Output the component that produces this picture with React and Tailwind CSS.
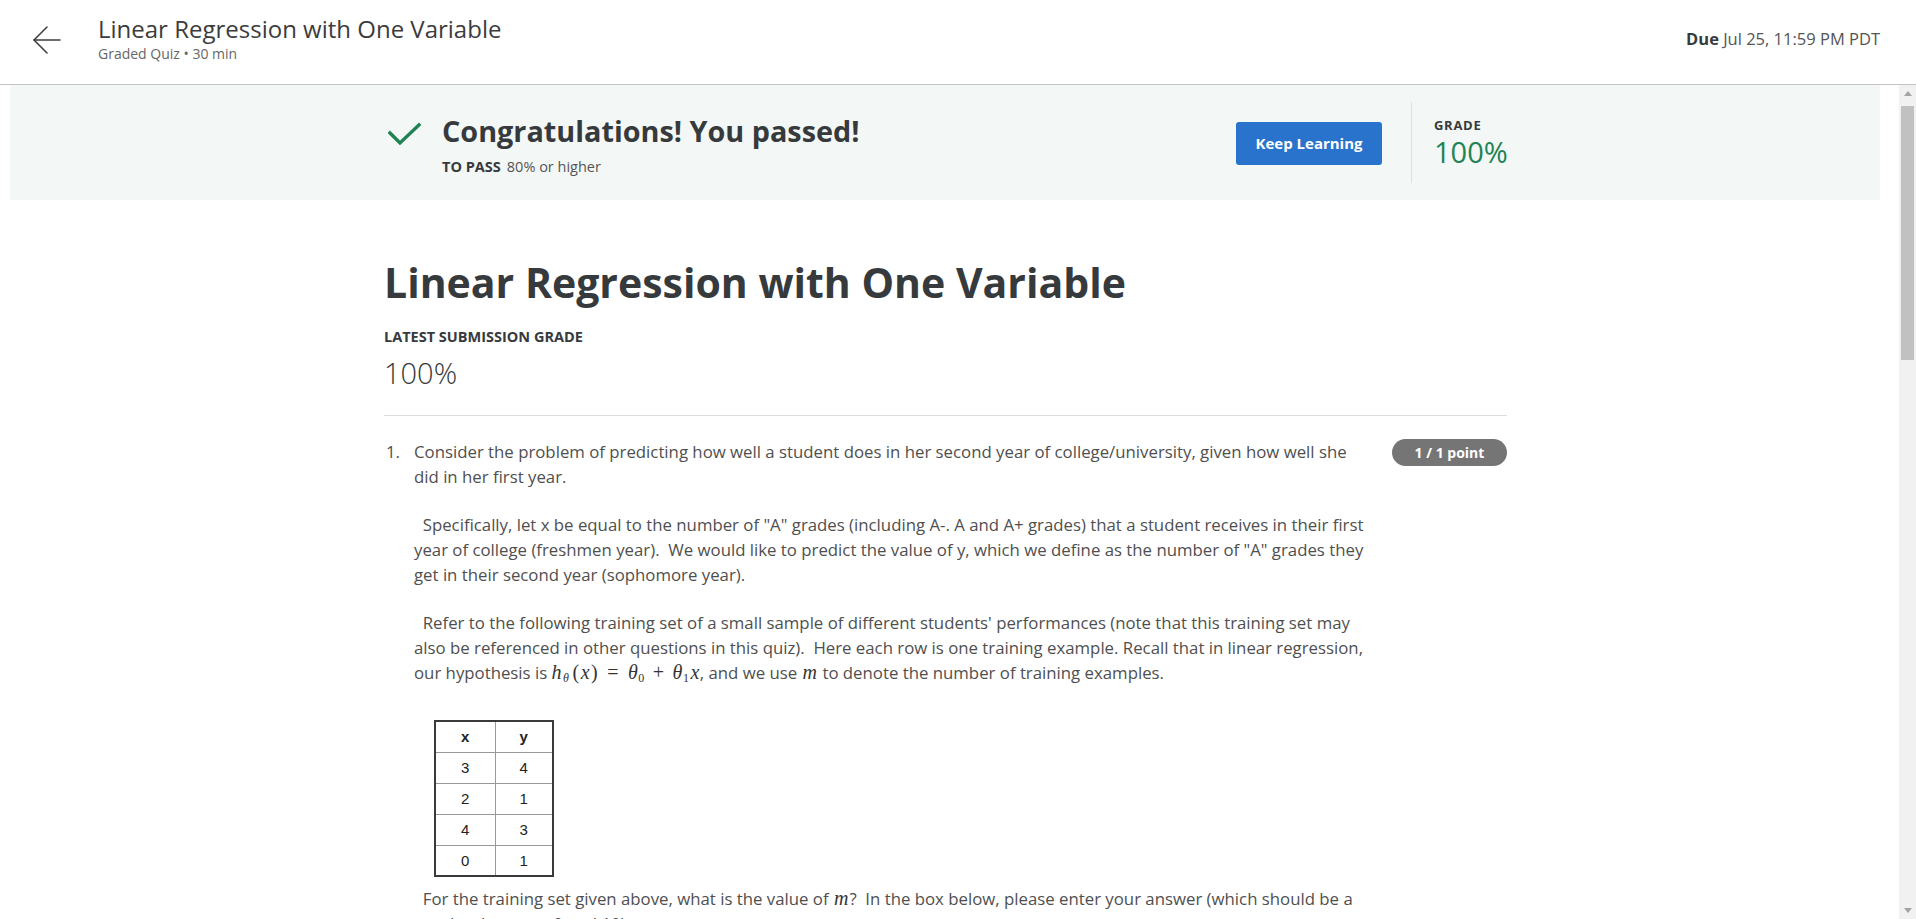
import React from 'react';

function BackArrow() {
  return (
    <svg width="28" height="28" viewBox="0 0 28 28" fill="none" stroke="#3c3c3c" strokeWidth="1.5" strokeLinecap="round" strokeLinejoin="round">
      <path d="M27 14H1" />
      <path d="M14 1L1 14l13 13" />
    </svg>
  );
}

function Check() {
  return (
    <svg width="34" height="26" viewBox="0 0 34 26" fill="none" stroke="#1f8354" strokeWidth="3.4" strokeLinecap="square">
      <path d="M2 11l10 10L31 3" />
    </svg>
  );
}

function Tri({ down }) {
  return (
    <svg width="8" height="5" viewBox="0 0 8 5" fill="#a3a3a3">
      {down ? <path d="M0 0h8L4 5z" /> : <path d="M0 5h8L4 0z" />}
    </svg>
  );
}

// hypothesis formula, spaced like MathJax output
function Hypothesis() {
  return (
    <span className="font-['Liberation_Serif',serif] text-[20px] tracking-[0.5px] text-[#333]">
      <i className="mr-[1px]">h</i>
      <sub className="text-[12px] italic">θ</sub>
      <span className="ml-[3px]">(</span>
      <i className="mx-[1px]">x</i>
      <span>)</span>
      <span className="mx-[9px]">=</span>
      <i>θ</i>
      <sub className="text-[12px]">0</sub>
      <span className="mx-[8px]">+</span>
      <i>θ</i>
      <sub className="text-[12px]">1</sub>
      <i className="ml-[1px]">x</i>
    </span>
  );
}

function M() {
  return <i className="mx-[1px] font-['Liberation_Serif',serif] text-[20px] text-[#333]">m</i>;
}

const rows = [
  ['3', '4'],
  ['2', '1'],
  ['4', '3'],
  ['0', '1'],
];

export default function App() {
  return (
    <div className="h-[919px] overflow-hidden bg-white font-['Open_Sans',sans-serif] text-[#373a3c]">
      <header className="flex h-[85px] items-start border-b border-[#c4c4c4]">
        <div className="pl-[33px] pt-[26px]">
          <BackArrow />
        </div>
        <div className="pl-[37px] pt-[13px]">
          <h1 className="text-[24px] leading-[32px] text-[#3c3c3c]">Linear Regression with One Variable</h1>
          <p className="text-[14px] leading-[18px] text-[#666]">Graded Quiz • 30 min</p>
        </div>
        <div className="ml-auto pr-[36px] pt-[27px] text-[16.5px] leading-[24px] text-[#555]">
          <span className="font-bold text-[#373a3c]">Due</span> Jul 25, 11:59 PM PDT
        </div>
      </header>

      <div className="flex h-[834px]">
        <main className="flex-1 overflow-hidden">
          <section className="ml-[10px] h-[115px] w-[1870px] bg-[#f3f8f7]">
            <div className="ml-[374px] flex w-[1123px] items-start">
              <div className="flex flex-1 items-start">
                <div className="ml-[4px] mt-[37px]">
                  <Check />
                </div>
                <div className="ml-[20px] pt-[28px]">
                  <h2 className="text-[28.8px] font-bold leading-[36px] text-[#373a3c]">Congratulations! You passed!</h2>
                  <p className="mt-[9px] text-[14.5px] leading-[18px] text-[#555]">
                    <span className="mr-[6px] font-bold text-[#373a3c]">TO PASS</span>80% or higher
                  </p>
                </div>
              </div>
              <button className="mt-[37px] h-[43px] w-[146px] rounded-[3px] bg-[#2a73cc] text-[15px] font-bold text-white">
                Keep Learning
              </button>
              <div className="ml-[29px] mt-[17px] h-[81px] w-px bg-[#dde3e2]" />
              <div className="w-[95px] pl-[22px] pt-[32px]">
                <div className="text-[13px] font-bold leading-[16px] tracking-[0.7px] text-[#373a3c]">GRADE</div>
                <div className="mt-[1px] text-[29px] leading-[36px] text-[#1f8354]">100%</div>
              </div>
            </div>
          </section>

          <div className="ml-[384px] w-[1123px] pb-[40px]">
            <h1 className="mt-[58px] text-[41px] font-bold leading-[48px] text-[#373a3c]">Linear Regression with One Variable</h1>
            <div className="mt-[22px] text-[14.5px] font-bold leading-[18px] text-[#373a3c]">LATEST SUBMISSION GRADE</div>
            <div className="mt-[9px] text-[29px] font-light leading-[36px] text-[#373a3c]">100%</div>
            <div className="mt-[24px] h-px bg-[#dcdcdc]" />

            <div className="mt-[23px] flex items-start text-[16.8px] leading-[25px] text-[#4f4f4f]">
              <div className="w-[30px] pl-[2px]">1.</div>
              <div className="w-[958px]">
                <p>Consider the problem of predicting how well a student does in her second year of college/university, given how well she did in her first year.</p>
                <p className="mt-[23px]">
                  {'\u00a0\u00a0'}Specifically, let x be equal to the number of "A" grades (including A-. A and A+ grades) that a student receives in their first year of college (freshmen year).{'\u00a0'} We would like to predict the value of y, which we define as the number of "A" grades they get in their second year (sophomore year).
                </p>
                <p className="mt-[23px]">
                  {'\u00a0\u00a0'}Refer to the following training set of a small sample of different students' performances (note that this training set may also be referenced in other questions in this quiz).{'\u00a0'} Here each row is one training example. Recall that in linear regression, our hypothesis is <Hypothesis />, and we use <M /> to denote the number of training examples.
                </p>
                <table className="ml-[20px] mt-[35px] border-collapse border-2 border-[#3a3a3a] font-['Liberation_Sans',Arial,sans-serif] text-[15px] text-[#222]">
                  <thead>
                    <tr>
                      <th className="h-[31px] w-[60px] border border-[#999] text-center">x</th>
                      <th className="h-[31px] w-[58px] border border-[#999] text-center">y</th>
                    </tr>
                  </thead>
                  <tbody>
                    {rows.map((r, i) => (
                      <tr key={i}>
                        <td className="h-[31px] border border-[#999] text-center">{r[0]}</td>
                        <td className="h-[31px] border border-[#999] text-center">{r[1]}</td>
                      </tr>
                    ))}
                  </tbody>
                </table>
                <p className="mt-[9px]">
                  {'\u00a0\u00a0'}For the training set given above, what is the value of <M />?{'\u00a0'} In the box below, please enter your answer (which should be a number between 0 and 10).
                </p>
              </div>
              <div className="ml-auto flex h-[27px] w-[115px] items-center justify-center rounded-full bg-[#757575] text-[14px] font-bold text-white">
                1 / 1 point
              </div>
            </div>
          </div>
        </main>

        <div className="flex w-[17px] flex-col bg-[#f1f1f1]">
          <div className="flex h-[17px] items-center justify-center">
            <Tri />
          </div>
          <div className="mx-[2px] mt-[4px] h-[254px] bg-[#c1c1c1]" />
          <div className="flex-1" />
          <div className="flex h-[17px] items-center justify-center">
            <Tri down />
          </div>
        </div>
      </div>
    </div>
  );
}
